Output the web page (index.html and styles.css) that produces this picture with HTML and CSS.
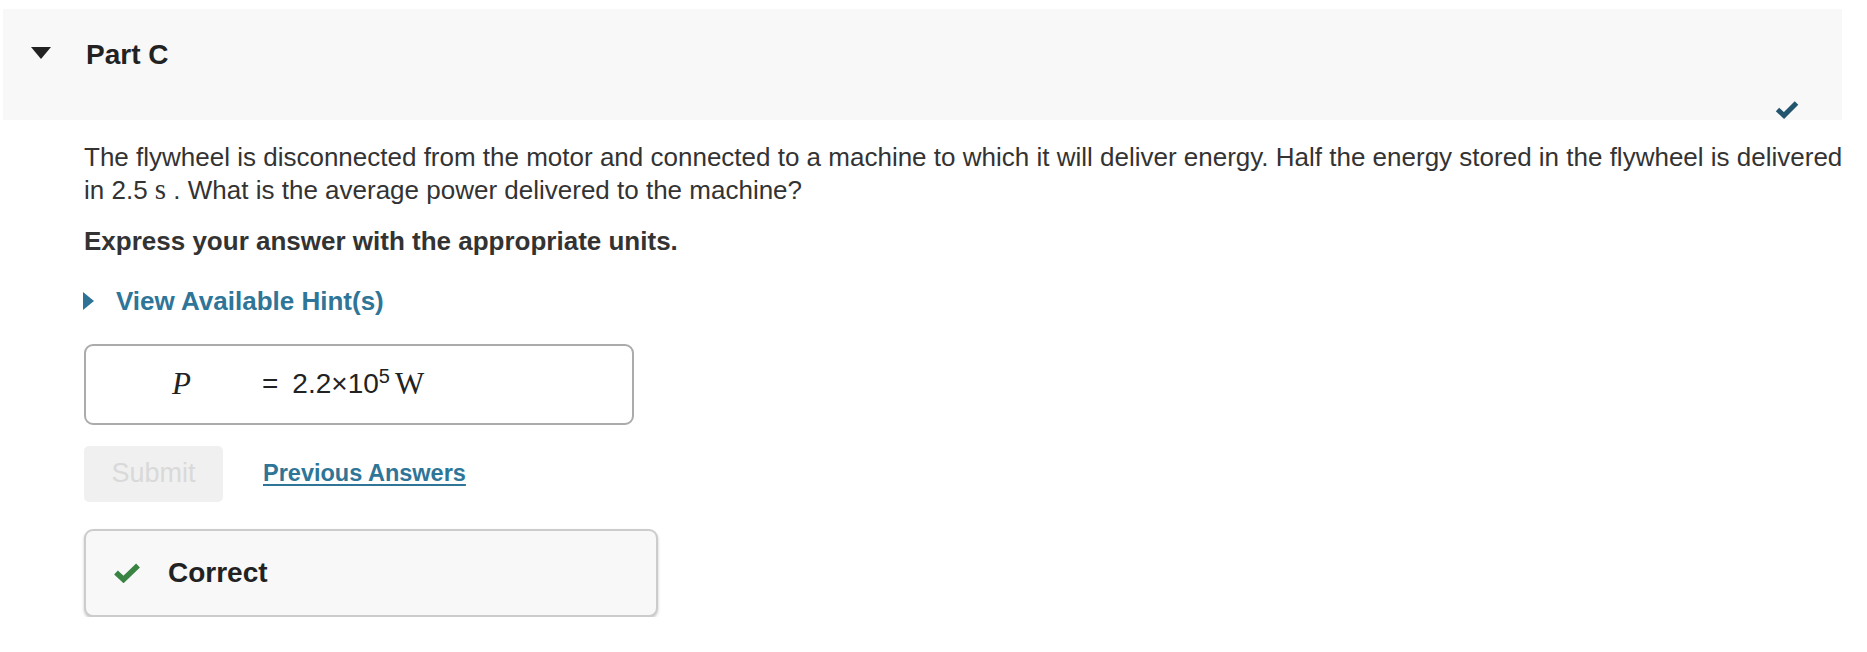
FILE: index.html
```html
<!DOCTYPE html>
<html lang="en">
<head>
<meta charset="utf-8">
<title>Part C</title>
<link rel="stylesheet" href="styles.css">
</head>
<body>
<div class="page">
  <section class="part">
    <header class="part-header">
      <span class="caret-down"></span>
      <h2 class="part-title">Part C</h2>
      <svg class="status-check" viewBox="0 0 24 19" width="24" height="19" aria-hidden="true">
        <polyline points="2.5,9.5 9,15.5 21.5,3" fill="none" stroke="#23566e" stroke-width="5"/>
      </svg>
    </header>
    <div class="part-body">
      <p class="question">The flywheel is disconnected from the motor and connected to a machine to which it will deliver energy. Half the energy stored in the flywheel is delivered in 2.5 <span class="math-roman">s</span> . What is the average power delivered to the machine?</p>
      <p class="instruction">Express your answer with the appropriate units.</p>
      <div class="hint-toggle">
        <span class="caret-right"></span>
        <a class="hint-link">View Available Hint(s)</a>
      </div>
      <div class="answer-box">
        <span class="math-var">P</span>
        <span class="math-eq">=</span>
        <span class="math-value">2.2×10<sup class="math-sup">5</sup></span>
        <span class="math-unit">W</span>
      </div>
      <div class="actions">
        <button class="submit-btn" disabled>Submit</button>
        <a class="prev-link">Previous Answers</a>
      </div>
      <div class="feedback">
        <svg class="feedback-check" viewBox="0 0 28 21" width="28" height="21" aria-hidden="true">
          <polyline points="3,10.5 10.5,17.5 25,3.5" fill="none" stroke="#3a8443" stroke-width="5.5"/>
        </svg>
        <span class="feedback-text">Correct</span>
      </div>
    </div>
  </section>
</div>
</body>
</html>
```

FILE: styles.css
```css
html, body {
  margin: 0;
  padding: 0;
  background: #ffffff;
}

body {
  font-family: "Liberation Sans", Arial, Helvetica, sans-serif;
  color: #333333;
}

.page {
  padding-top: 9px;
}

.part-header {
  position: relative;
  margin-left: 3px;
  width: 1839px;
  height: 111px;
  background: #f8f8f8;
  display: flex;
  align-items: flex-start;
  padding: 29px 0 0 28px;
  box-sizing: border-box;
}

.caret-down {
  width: 0;
  height: 0;
  margin-top: 9px;
  border-left: 10.5px solid transparent;
  border-right: 10.5px solid transparent;
  border-top: 12px solid #222222;
}

.part-title {
  margin: 0 0 0 35px;
  font-size: 28px;
  line-height: 34px;
  font-weight: 700;
  color: #222222;
}

.status-check {
  position: absolute;
  right: 43px;
  top: 91px;
}

.part-body {
  padding: 21px 0 0 84px;
  width: 1772px;
}

.question {
  margin: 0;
  font-size: 26px;
  line-height: 32.5px;
}

.math-roman {
  font-family: "Liberation Serif", "Times New Roman", serif;
  font-size: 29px;
  line-height: 1;
}

.instruction {
  margin: 19px 0 0;
  font-size: 26px;
  line-height: 32.5px;
  font-weight: 700;
}

.hint-toggle {
  margin-top: 27.5px;
  display: flex;
  align-items: center;
  height: 32.5px;
}

.caret-right {
  width: 0;
  height: 0;
  border-top: 9px solid transparent;
  border-bottom: 9px solid transparent;
  border-left: 11px solid #2e7396;
  margin-left: -1px;
}

.hint-link {
  margin-left: 22px;
  font-size: 26px;
  line-height: 32.5px;
  font-weight: 700;
  color: #2e7598;
}

.answer-box {
  margin-top: 26px;
  width: 550px;
  height: 81px;
  box-sizing: border-box;
  border: 2px solid #ababab;
  border-radius: 9px;
  display: flex;
  align-items: center;
  padding-left: 86px;
  color: #222222;
}

.math-var {
  width: 90px;
  font-family: "Liberation Serif", "Times New Roman", serif;
  font-style: italic;
  font-size: 31px;
}

.math-eq {
  font-size: 28px;
}

.math-value {
  margin-left: 14px;
  font-size: 28px;
}

.math-sup {
  font-size: 20px;
  line-height: 0;
}

.math-unit {
  margin-left: 5px;
  font-family: "Liberation Serif", "Times New Roman", serif;
  font-size: 31px;
}

.actions {
  margin-top: 21px;
  display: flex;
  align-items: center;
}

.submit-btn {
  width: 139px;
  height: 56px;
  border: none;
  border-radius: 5px;
  background: #f0f0f0;
  color: #d9d9d9;
  font-family: "Liberation Sans", Arial, Helvetica, sans-serif;
  font-size: 27px;
  padding: 0;
}

.prev-link {
  margin-left: 40px;
  font-size: 23.5px;
  font-weight: 700;
  color: #2e7598;
  text-decoration: underline;
  text-decoration-thickness: 2px;
  text-underline-offset: 3px;
}

.feedback {
  margin-top: 27px;
  width: 574px;
  height: 88px;
  box-sizing: border-box;
  border: 2px solid #cccccc;
  border-radius: 9px;
  background: #f8f8f8;
  box-shadow: 0 2px 3px rgba(0, 0, 0, 0.22);
  display: flex;
  align-items: center;
  padding-left: 27px;
}

.feedback-text {
  margin-left: 27px;
  font-size: 28px;
  font-weight: 700;
  color: #222222;
}
```
